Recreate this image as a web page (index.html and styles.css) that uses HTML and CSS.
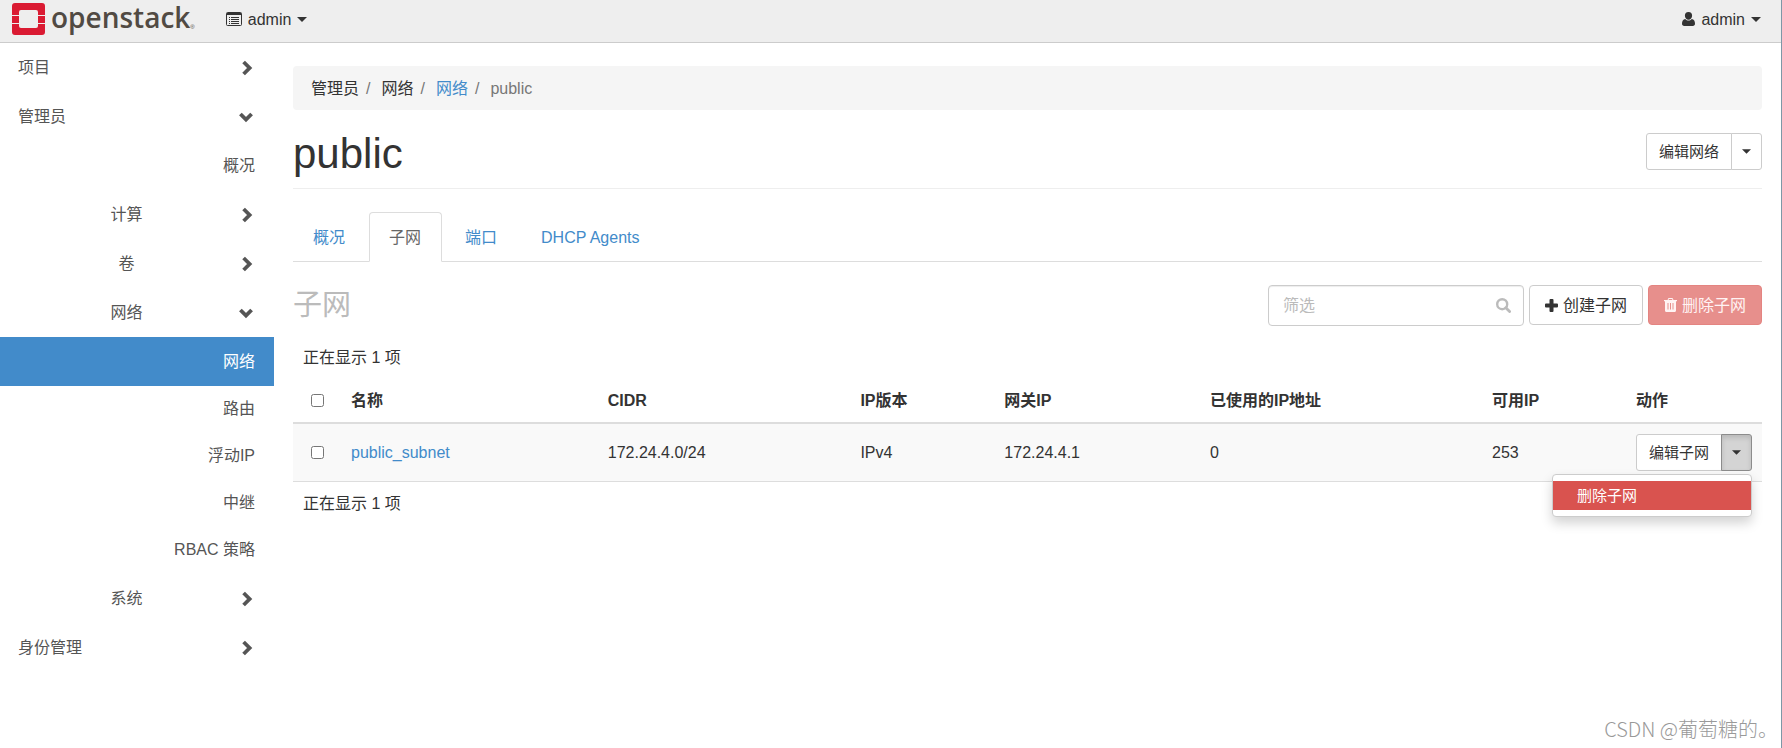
FILE: index.html
```html
<!DOCTYPE html>
<html lang="zh-CN">
<head>
<meta charset="utf-8">
<meta name="viewport" content="width=device-width, initial-scale=1">
<title>public - OpenStack Dashboard</title>
<link rel="stylesheet" href="styles.css">
</head>
<body>
<svg class="sprite" aria-hidden="true">
  <symbol id="chev-right" viewBox="0 0 14 16"><path d="M4.6 2 10.6 8 4.6 14" fill="none" stroke="currentColor" stroke-width="3.8"/></symbol>
  <symbol id="chev-down" viewBox="0 0 14 16"><path d="M1.4 5 7 10.600 12.6 5" fill="none" stroke="currentColor" stroke-width="3.8"/></symbol>
  <symbol id="caret" viewBox="0 0 10 5"><path d="M0 0h10L5 5z" fill="currentColor"/></symbol>
</svg>
<header class="topbar">
  <a class="brand" href="#" aria-label="openstack">
    <svg class="brand-mark" viewBox="0 0 33 32" aria-hidden="true">
      <path fill="#da1a32" d="M3 0h27a3 3 0 0 1 3 3v9h-7V9a2 2 0 0 0-2-2H9a2 2 0 0 0-2 2v3H0V3a3 3 0 0 1 3-3zM0 21h7v2a2 2 0 0 0 2 2h15a2 2 0 0 0 2-2v-2h7v8a3 3 0 0 1-3 3H3a3 3 0 0 1-3-3zM0 13h7v7H0zM26 13h7v7h-7z"/>
    </svg>
    <span class="brand-name">openstack</span><span class="brand-dot">®</span>
  </a>
  <button class="top-menu" type="button">
    <svg class="icon-list" viewBox="0 0 16 14" aria-hidden="true"><path fill="none" stroke="currentColor" d="M1.5.5h13a1 1 0 0 1 1 1v11a1 1 0 0 1-1 1h-13a1 1 0 0 1-1-1v-11a1 1 0 0 1 1-1z"/><path fill="currentColor" d="M1 1h14v2H1zM3 5h1v1H3zM5 5h8v1H5zM3 7h1v1H3zM5 7h8v1H5zM3 9h1v1H3zM5 9h8v1H5zM3 11h1v1H3zM5 11h8v1H5z"/></svg>
    <span>admin</span>
    <svg class="caret" aria-hidden="true"><use href="#caret"/></svg>
  </button>
  <button class="top-menu top-user" type="button">
    <svg class="icon-user" viewBox="0 0 13 14" aria-hidden="true"><path fill="currentColor" d="M6.500 0a3.700 3.700 0 0 1 3.600 3.800c0 2.100-1.500 4-3.600 4s-3.600-1.900-3.600-4A3.700 3.700 0 0 1 6.500 0zM3.300 7c.9 1 2 1.500 3.200 1.500S8.800 8 9.700 7c2.300.2 3.300 2.300 3.300 4.800 0 1.300-.9 2.200-2.200 2.200H2.200C.9 14 0 13.100 0 11.800 0 9.300 1 7.200 3.300 7z"/></svg>
    <span>admin</span>
    <svg class="caret" aria-hidden="true"><use href="#caret"/></svg>
  </button>
</header>
<div class="layout">
  <nav class="sidebar" aria-label="主导航">
    <button class="side-row" type="button"><span class="side-label">项目</span><svg class="chev" aria-hidden="true"><use href="#chev-right"/></svg></button>
    <button class="side-row" type="button"><span class="side-label">管理员</span><svg class="chev" aria-hidden="true"><use href="#chev-down"/></svg></button>
    <a class="side-link side-link-tall" href="#">概况</a>
    <button class="side-row side-group" type="button"><span class="side-label">计算</span><svg class="chev" aria-hidden="true"><use href="#chev-right"/></svg></button>
    <button class="side-row side-group" type="button"><span class="side-label">卷</span><svg class="chev" aria-hidden="true"><use href="#chev-right"/></svg></button>
    <button class="side-row side-group" type="button"><span class="side-label">网络</span><svg class="chev" aria-hidden="true"><use href="#chev-down"/></svg></button>
    <a class="side-link side-link-tall is-active" href="#">网络</a>
    <a class="side-link" href="#">路由</a>
    <a class="side-link" href="#">浮动IP</a>
    <a class="side-link" href="#">中继</a>
    <a class="side-link" href="#">RBAC 策略</a>
    <button class="side-row side-group" type="button"><span class="side-label">系统</span><svg class="chev" aria-hidden="true"><use href="#chev-right"/></svg></button>
    <button class="side-row" type="button"><span class="side-label">身份管理</span><svg class="chev" aria-hidden="true"><use href="#chev-right"/></svg></button>
  </nav>
  <main class="content">
    <ol class="breadcrumb">
      <li>管理员</li>
      <li>网络</li>
      <li><a href="#">网络</a></li>
      <li class="crumb-current">public</li>
    </ol>
    <div class="page-header">
      <h1>public</h1>
      <div class="btn-group">
        <button class="btn btn-sm" type="button">编辑网络</button>
        <button class="btn btn-sm btn-caret" type="button" aria-label="更多操作"><svg class="caret caret-sm" aria-hidden="true"><use href="#caret"/></svg></button>
      </div>
    </div>
    <nav class="tabs" aria-label="网络详情">
      <a class="tab" href="#">概况</a>
      <a class="tab is-current" href="#">子网</a>
      <a class="tab" href="#">端口</a>
      <a class="tab" href="#">DHCP Agents</a>
    </nav>
    <div class="toolbar">
      <h2>子网</h2>
      <div class="search">
        <input type="text" placeholder="筛选" aria-label="筛选">
        <svg class="icon-search" viewBox="0 0 15 15" aria-hidden="true"><circle cx="6.200" cy="6.200" r="5" fill="none" stroke="currentColor" stroke-width="2.400"/><path d="M9.800 9.800 13.600 13.600" stroke="currentColor" stroke-width="2.800" stroke-linecap="round"/></svg>
      </div>
      <button class="btn" type="button"><svg class="icon-plus" viewBox="0 0 13 13" aria-hidden="true"><path fill="currentColor" d="M5.500 0h2a1 1 0 0 1 1 1v3.500H12a1 1 0 0 1 1 1v2a1 1 0 0 1-1 1H8.500V12a1 1 0 0 1-1 1h-2a1 1 0 0 1-1-1V8.500H1a1 1 0 0 1-1-1v-2a1 1 0 0 1 1-1h3.500V1a1 1 0 0 1 1-1z"/></svg>创建子网</button>
      <button class="btn btn-danger" type="button" disabled><svg class="icon-trash" viewBox="0 0 13 14" aria-hidden="true"><path fill="currentColor" fill-rule="evenodd" d="M4.500 0h4l1 2H13v1.200h-1V12.500c0 .8-.6 1.500-1.300 1.500H2.300C1.600 14 1 13.300 1 12.500V3.200H0V2h3.500zM5 1l-.5 1h4L8 1zM3.500 5v6.500h1V5zM6 5v6.500h1V5zM8.500 5v6.500h1V5z"/></svg>删除子网</button>
    </div>
    <p class="table-count">正在显示 1 项</p>
    <table class="subnets">
      <thead>
        <tr>
          <th class="col-check"><input type="checkbox" aria-label="全选"></th>
          <th>名称</th>
          <th class="col-cidr">CIDR</th>
          <th class="col-version">IP版本</th>
          <th class="col-gateway">网关IP</th>
          <th class="col-used">已使用的IP地址</th>
          <th class="col-free">可用IP</th>
          <th class="col-actions">动作</th>
        </tr>
      </thead>
      <tbody>
        <tr>
          <td class="col-check"><input type="checkbox" aria-label="选择 public_subnet"></td>
          <td><a href="#">public_subnet</a></td>
          <td>172.24.4.0/24</td>
          <td>IPv4</td>
          <td>172.24.4.1</td>
          <td>0</td>
          <td>253</td>
          <td>
            <div class="btn-group">
              <button class="btn btn-sm" type="button">编辑子网</button>
              <button class="btn btn-sm btn-caret is-open" type="button" aria-label="更多操作" aria-expanded="true"><svg class="caret caret-sm" aria-hidden="true"><use href="#caret"/></svg></button>
              <div class="menu"><button class="menu-item" type="button">删除子网</button></div>
            </div>
          </td>
        </tr>
      </tbody>
    </table>
    <p class="table-count">正在显示 1 项</p>
  </main>
</div>
<div class="watermark">CSDN @葡萄糖的。</div>
</body>
</html>
```
FILE: styles.css
```css
* {
  box-sizing: border-box;
}

body {
  position: relative;
  margin: 0;
  min-height: 100vh;
  border-right: 1px solid #7e97a6;
  background: #fff;
  color: #333;
  font: 16px/23px "Liberation Sans", "Noto Sans CJK SC", sans-serif;
}

button,
input {
  font: inherit;
  color: inherit;
}

a {
  color: #428bca;
  text-decoration: none;
}

h1,
h2,
p {
  margin: 0;
  font-weight: 400;
}

.sprite {
  position: absolute;
  width: 0;
  height: 0;
}

/* Top bar */
.topbar {
  display: flex;
  align-items: center;
  height: 43px;
  padding: 0 20px 4px 12px;
  border-bottom: 1px solid #ccc;
  background: #eee;
}

.brand {
  display: flex;
  align-items: center;
  margin-right: 31px;
  color: #514a43;
}

.brand-mark {
  width: 33px;
  height: 32px;
  margin-right: 6px;
}

.brand-name {
  padding-bottom: 4px;
  font: 600 28px/32px "Open Sans", sans-serif;
}

.brand-dot {
  align-self: flex-end;
  font-size: 6px;
  line-height: 20px;
}

.top-menu {
  display: flex;
  align-items: center;
  gap: 6px;
  padding: 0;
  border: 0;
  background: none;
}

.top-user {
  margin-left: auto;
}

.icon-list {
  width: 16px;
  height: 14px;
}

.icon-user {
  width: 13px;
  height: 14px;
}

.caret {
  width: 10px;
  height: 5px;
}

.caret-sm {
  width: 9px;
  height: 5px;
}

/* Side navigation */
.layout {
  display: flex;
}

.sidebar {
  display: flex;
  flex-direction: column;
  flex: 0 0 274px;
}

.side-row {
  display: flex;
  align-items: center;
  gap: 4px;
  padding: 13px 21px 13px 18px;
  border: 0;
  background: none;
  color: #555;
  text-align: left;
}

.side-label {
  flex: 1;
}

.side-group {
  text-align: center;
}

.chev {
  width: 14px;
  height: 16px;
}

.side-link {
  padding: 11px 19px 13px;
  color: #555;
  text-align: right;
}

.side-link-tall {
  padding: 13px 19px;
}

.side-link.is-active {
  background: #428bca;
  color: #fff;
}

/* Content */
.content {
  flex: 1;
  min-width: 0;
  padding: 23px 19px;
}

.breadcrumb {
  display: flex;
  margin: 0;
  padding: 11px 18px 10px;
  border-radius: 4px;
  background: #f5f5f5;
  list-style: none;
}

.breadcrumb li + li::before {
  content: "/";
  padding: 0 11px 0 7px;
  color: #777;
}

.crumb-current {
  color: #777;
}

.page-header {
  display: flex;
  justify-content: space-between;
  align-items: flex-start;
  padding: 23px 0 18px;
  border-bottom: 1px solid #eee;
}

.page-header h1 {
  height: 37px;
  font-size: 42px;
  line-height: 42px;
}

.tabs {
  display: flex;
  gap: 3px;
  margin: 23px 0;
  border-bottom: 1px solid #ddd;
}

.tab {
  margin-bottom: -1px;
  padding: 13px 20px 12px 19px;
  border: 1px solid transparent;
  border-radius: 4px 4px 0 0;
}

.tab.is-current {
  border-color: #ddd #ddd #fff;
  background: #fff;
  color: #666;
}

.toolbar {
  display: flex;
  align-items: flex-start;
  gap: 5px;
  margin-bottom: 10px;
}

.toolbar h2 {
  flex: 1;
  color: #bbb;
  font-size: 29px;
  line-height: 40px;
}

.search {
  position: relative;
  width: 256px;
}

.search input {
  display: block;
  width: 100%;
  height: 41px;
  padding: 8px 40px 8px 14px;
  border: 1px solid #ccc;
  border-radius: 4px;
  background: #fff;
  box-shadow: inset 0 1px 1px rgba(0, 0, 0, 0.075);
}

.search input::placeholder {
  color: #bbb;
  opacity: 1;
}

.icon-search {
  position: absolute;
  top: 13px;
  right: 13px;
  width: 15px;
  height: 15px;
  color: #bbb;
}

.btn {
  display: flex;
  align-items: center;
  gap: 5px;
  height: 40px;
  padding: 0 15px;
  border: 1px solid #ccc;
  border-radius: 4px;
  background: #fff;
  white-space: nowrap;
}

.btn-danger {
  border-color: #e48481;
  background: #e78f8c;
  color: #fff3f3;
}

.icon-plus {
  width: 13px;
  height: 13px;
}

.icon-trash {
  width: 13px;
  height: 14px;
}

.btn-group {
  position: relative;
  display: flex;
}

.btn-sm {
  height: 37px;
  padding: 0 12px;
  border-radius: 3px 0 0 3px;
  font-size: 15px;
}

.btn-caret {
  margin-left: -1px;
  padding: 0 10px;
  border-radius: 0 3px 3px 0;
}

.btn-caret.is-open {
  border-color: #8c8c8c;
  background: #d4d4d4;
  box-shadow: inset 0 3px 5px rgba(0, 0, 0, 0.125);
}

.menu {
  position: absolute;
  top: 100%;
  right: 0;
  z-index: 1;
  width: 200px;
  margin-top: 3px;
  padding: 6px 0;
  border: 1px solid #ccc;
  border-radius: 4px;
  background: #fff;
  box-shadow: 0 6px 12px rgba(0, 0, 0, 0.175);
}

.menu-item {
  display: block;
  width: 100%;
  padding: 3px 24px;
  border: 0;
  background: #d9534f;
  color: #fff;
  font-size: 15px;
  text-align: left;
}

/* Table */
.table-count {
  padding: 10px;
}

.subnets {
  width: 100%;
  border-collapse: separate;
  border-spacing: 0;
  table-layout: fixed;
}

.subnets th,
.subnets td {
  padding: 10px;
  text-align: left;
  vertical-align: middle;
}

.subnets th {
  border-bottom: 2px solid #ddd;
}

.subnets td {
  border-bottom: 1px solid #ddd;
  background: #f9f9f9;
}

.subnets .col-check {
  width: 48px;
  padding-left: 18px;
}

.col-check input {
  display: block;
  width: 13px;
  height: 13px;
  margin: 0;
}

.col-cidr {
  width: 17.2%;
}

.col-version,
.col-free {
  width: 9.8%;
}

.col-gateway {
  width: 14%;
}

.col-used {
  width: 19.2%;
}

.col-actions {
  width: 136px;
}

.watermark {
  position: absolute;
  right: 3px;
  bottom: 4px;
  color: #999;
  font: 300 20px/30px "Noto Sans CJK SC", sans-serif;
}
```
